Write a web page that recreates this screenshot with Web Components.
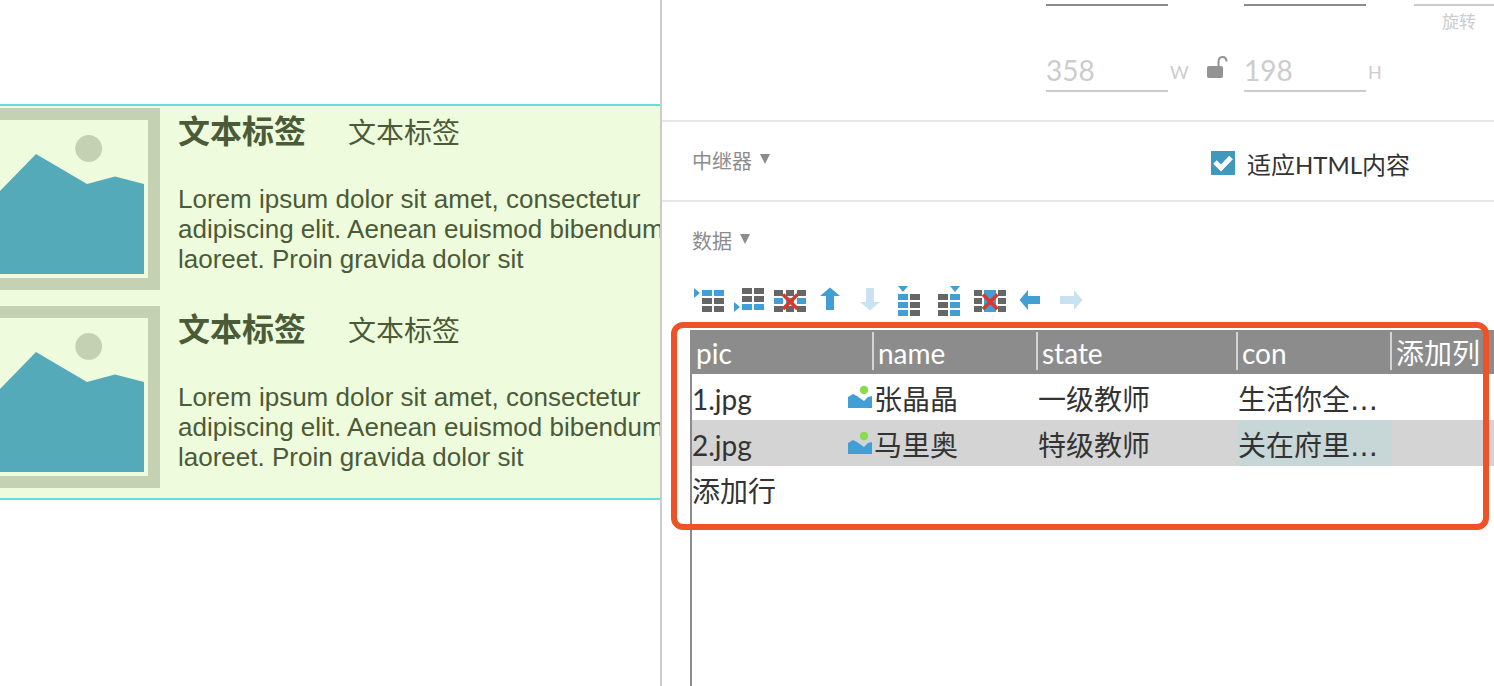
<!DOCTYPE html>
<html lang="zh-CN">
<head>
<meta charset="utf-8">
<title>中继器</title>
<style>
  body {
    margin: 0;
    background: #fff;
    color: #333;
    font-family: Lato, "Noto Sans CJK SC", sans-serif;
  }
</style>
</head>
<body>
<editor-layout>
  <design-canvas slot="canvas">
    <repeater-item>
      <span slot="title">文本标签</span>
      <span slot="label">文本标签</span>
      Lorem ipsum dolor sit amet, consectetur<br>adipiscing elit. Aenean euismod bibendum<br>laoreet. Proin gravida dolor sit
    </repeater-item>
    <repeater-item>
      <span slot="title">文本标签</span>
      <span slot="label">文本标签</span>
      Lorem ipsum dolor sit amet, consectetur<br>adipiscing elit. Aenean euismod bibendum<br>laoreet. Proin gravida dolor sit
    </repeater-item>
  </design-canvas>
  <size-fields slot="panel"></size-fields>
  <panel-section slot="panel">
    中继器
    <check-option slot="aside">适应HTML内容</check-option>
  </panel-section>
  <panel-section slot="panel" plain>
    数据
  </panel-section>
  <table-tools slot="panel"></table-tools>
  <data-table slot="panel" class="fill"></data-table>
</editor-layout>

<script>
const define = (name, html) => {
  const template = document.createElement('template');
  template.innerHTML = html;
  customElements.define(name, class extends HTMLElement {
    constructor() {
      super();
      this.attachShadow({ mode: 'open' }).append(template.content.cloneNode(true));
    }
  });
};

define('editor-layout', `
  <style>
    :host { display: grid; grid-template-columns: minmax(0, 660fr) minmax(0, 834fr); min-height: 100vh; }
    main { min-width: 0; }
    aside { display: flex; flex-direction: column; border-left: 2px solid #ccc; min-width: 0; overflow: hidden; }
    ::slotted(.fill) { flex: 1; }
  </style>
  <main><slot name="canvas"></slot></main>
  <aside><slot name="panel"></slot></aside>
`);

define('design-canvas', `
  <style>
    :host { display: block; padding-top: 104px; }
    div {
      display: grid; gap: 16px; padding: 2px 0 10px; overflow: hidden;
      background: #eefcdd; border: solid #66ddd8; border-width: 2px 0;
    }
  </style>
  <div><slot></slot></div>
`);

define('repeater-item', `
  <style>
    :host { display: flex; gap: 18px; color: #4b5a37; font-family: "Liberation Sans", "Noto Sans CJK SC", sans-serif; }
    svg { flex: none; display: block; border: 12px solid #c5d1b3; border-left: 0; }
    header { display: flex; gap: 42px; align-items: baseline; height: 46px; line-height: 48px; white-space: nowrap; }
    h2 { margin: 0; font-size: 32px; line-height: 48px; font-weight: 700; }
    .label { font-size: 28px; }
    p { margin: 30px 0 0; font-size: 26px; line-height: 30px; white-space: nowrap; }
  </style>
  <svg width="148" height="158" viewBox="0 0 148 158" aria-hidden="true">
    <circle cx="88.7" cy="28.4" r="13.4" fill="#c5d1b3"/>
    <path d="M0 71 36 34 87 64 115 56.500 144 64V154H0Z" fill="#54aab8"/>
  </svg>
  <div>
    <header><h2><slot name="title"></slot></h2><span class="label"><slot name="label"></slot></span></header>
    <p><slot></slot></p>
  </div>
`);

define('size-fields', `
  <style>
    :host { display: block; border-bottom: 2px solid #e6e6e6; }
    .grid { display: grid; grid-template-columns: 122px 76px 122px 48px 80px; justify-content: end; padding: 0 0 28px; color: #ccc; }
    input {
      box-sizing: border-box; display: block; width: 100%; margin: 0; padding: 0; border: 0;
      border-bottom: 2px solid #ccc; background: none; color: #ccc; font: 28px Lato, sans-serif; outline: 0;
    }
    .top { height: 50px; }
    .top input { height: 6px; border-color: #8c8c8c; }
    .rotate input { border-color: #ccc; }
    .rotate label { display: block; margin-top: 4px; padding-left: 10px; text-align: center; font-size: 17px; line-height: 24px; }
    .size input { height: 42px; }
    .unit { display: flex; justify-content: space-between; padding: 4px 16px 0 2px; font-size: 18px; line-height: 36px; }
    button { border: 0; padding: 2px 0 0; margin: 0; background: none; height: 26px; }
    svg { display: block; }
  </style>
  <div class="grid">
    <div class="top"><input aria-label="X"></div><span></span>
    <div class="top"><input aria-label="Y"></div><span></span>
    <div class="top rotate"><input id="r"><label for="r">旋转</label></div>
    <div class="size"><input id="w" value="358"></div>
    <div class="unit"><label for="w">W</label>
      <button aria-label="lock"><svg width="21" height="24" viewBox="0 0 21 24"><rect y="10" width="16" height="12" rx="2" fill="#939393"/><path d="M11.500 11V6Q11.500 1 15.500 1T19.500 5.500" fill="none" stroke="#939393" stroke-width="2"/></svg></button>
    </div>
    <div class="size"><input id="h" value="198"></div>
    <div class="unit"><label for="h">H</label></div>
  </div>
`);

define('panel-section', `
  <style>
    :host { display: flex; justify-content: space-between; align-items: center; height: 78px; padding: 0 84px 0 30px; border-bottom: 2px solid #e6e6e6; white-space: nowrap; }
    :host([plain]) { border-bottom: 0; }
    button { display: flex; align-items: center; gap: 8px; border: 0; padding: 0; background: none; color: #8c8c8c; font: 20px/30px Lato, "Noto Sans CJK SC", sans-serif; }
    svg { margin-bottom: 4px; }
  </style>
  <button><span><slot></slot></span><svg width="10" height="10" aria-hidden="true"><path d="M0 0H10L5 10Z" fill="#8c8c8c"/></svg></button>
  <slot name="aside"></slot>
`);

define('check-option', `
  <style>
    :host { display: block; padding-top: 4px; font-size: 24px; line-height: 36px; }
    label { display: flex; align-items: center; gap: 12px; }
    input { appearance: none; width: 24px; height: 24px; margin: 0; background: #4099bd; }
    .box { display: grid; }
    .box > * { grid-area: 1 / 1; }
    svg { pointer-events: none; }
    .text { padding-top: 4px; }
  </style>
  <label><span class="box"><input type="checkbox" checked><svg width="24" height="24"><path d="m4 11 6 6L20 6.500" fill="none" stroke="#fff" stroke-width="5"/></svg></span><span class="text"><slot></slot></span></label>
`);

const BLUE = '#429fd6', GRAY = '#666', PALE = '#c9e2f2';
const rects = (xs, ys, color) => xs.flatMap(([x, w], i) => ys.map((y, j) =>
  `<rect x="${x}" y="${y}" width="${w}" height="6" fill="${color(i, j)}"/>`)).join('');
const shape = (d, fill) => `<path d="${d}" fill="${fill}"/>`;
const cross = '<path d="M9 10.500 23.500 25M23.500 10.500 9 25" stroke="#e0352b" stroke-width="3.600"/>';
const three = [[0, 9], [12, 8], [23, 9]];
const tools = [
  ['在上方插入行', rects([[8, 10], [20, 10]], [6, 14, 22], (i, j) => j === 0 ? BLUE : GRAY) + shape('M0 4 6 9 0 14Z', BLUE)],
  ['在下方插入行', rects([[8, 10], [20, 10]], [4, 12, 20], (i, j) => j === 2 ? BLUE : GRAY) + shape('M0 18 6 23 0 28Z', BLUE)],
  ['删除行', rects(three, [6, 14, 22], (i, j) => j === 1 ? BLUE : GRAY) + cross],
  ['上移行', shape('M16 3.500 26 12H20V26H12V12H6Z', BLUE)],
  ['下移行', shape('M16 26.500 26 18H20V4H12V18H6Z', PALE)],
  ['在左侧插入列', rects([[4, 10], [16, 10]], [10, 18, 26], i => i === 0 ? BLUE : GRAY) + shape('M4 2H14L9 8Z', BLUE)],
  ['在右侧插入列', rects([[4, 10], [16, 10]], [10, 18, 26], i => i === 1 ? BLUE : GRAY) + shape('M16 2H26L21 8Z', BLUE)],
  ['删除列', rects([[0, 8], [24, 8]], [6, 14, 22], () => GRAY) + shape('M10 6H22V28H10Z', BLUE) + cross],
  ['左移列', shape('M5.500 16 14 6V12H26V20H14V26Z', BLUE)],
  ['右移列', shape('M28.500 16 20 6V12H6V20H20V26Z', PALE)]
];

define('table-tools', `
  <style>
    :host { display: flex; gap: 8px; padding: 4px 0 14px 32px; }
    button { border: 0; padding: 0; background: none; }
    svg { display: block; }
  </style>
  ${tools.map(([name, art]) => `<button aria-label="${name}"><svg width="32" height="32" viewBox="0 0 32 32">${art}</svg></button>`).join('')}
`);

define('picture-cell', `
  <style>
    :host { display: flex; justify-content: space-between; align-items: center; padding-right: 2px; }
    svg { display: block; margin-bottom: 4px; }
  </style>
  <span><slot></slot></span>
  <svg width="24" height="24" aria-hidden="true"><circle cx="16" cy="5" r="4.200" fill="#88dd4e"/><path d="M0 12 5 9 9 11 16 16 20 12 24 11V23H0Z" fill="#429fd6"/></svg>
`);

define('data-table', `
  <style>
    :host { display: block; margin-left: 28px; border-left: 2px solid #8c8c8c; }
    .wrap { position: relative; }
    table { width: 100%; table-layout: fixed; border-collapse: collapse; font-size: 28px; line-height: 42px; white-space: nowrap; text-align: left; }
    th, td { padding: 0; font-weight: 400; }
    td { padding-top: 4px; }
    th { height: 44px; background: #8c8c8c; color: #fff; }
    th > * { display: block; box-sizing: border-box; height: 38px; margin-bottom: 2px; padding-left: 4px; border-right: 2px solid #d4d4d4; }
    .c1 { width: 182px; } .c2 { width: 164px; } .c3 { width: 200px; } .c4 { width: 154px; }
    button { display: block; border: 0; padding: 0; background: none; color: inherit; font: inherit; }
    th button { padding: 0 0 0 4px; border: 0; }
    .selected { background: #d4d4d4; }
    .selected .active { background: #c7d6d6; }
    .dots { font-family: "DejaVu Sans", sans-serif; line-height: 0; }
    .callout { position: absolute; inset: -8px 5px -18px -21px; border: 6px solid #f05228; border-radius: 12px; pointer-events: none; }
  </style>
  <div class="wrap">
    <table>
      <colgroup><col class="c1"><col class="c2"><col class="c3"><col class="c4"><col></colgroup>
      <thead><tr><th><span>pic</span></th><th><span>name</span></th><th><span>state</span></th><th><span>con</span></th><th><button>添加列</button></th></tr></thead>
      <tbody>
        <tr><td><picture-cell>1.jpg</picture-cell></td><td>张晶晶</td><td>一级教师</td><td>生活你全<span class="dots">…</span></td><td></td></tr>
        <tr class="selected"><td><picture-cell>2.jpg</picture-cell></td><td>马里奥</td><td>特级教师</td><td class="active">关在府里<span class="dots">…</span></td><td></td></tr>
        <tr><td colspan="5"><button>添加行</button></td></tr>
      </tbody>
    </table>
    <div class="callout"></div>
  </div>
`);
</script>
</body>
</html>
